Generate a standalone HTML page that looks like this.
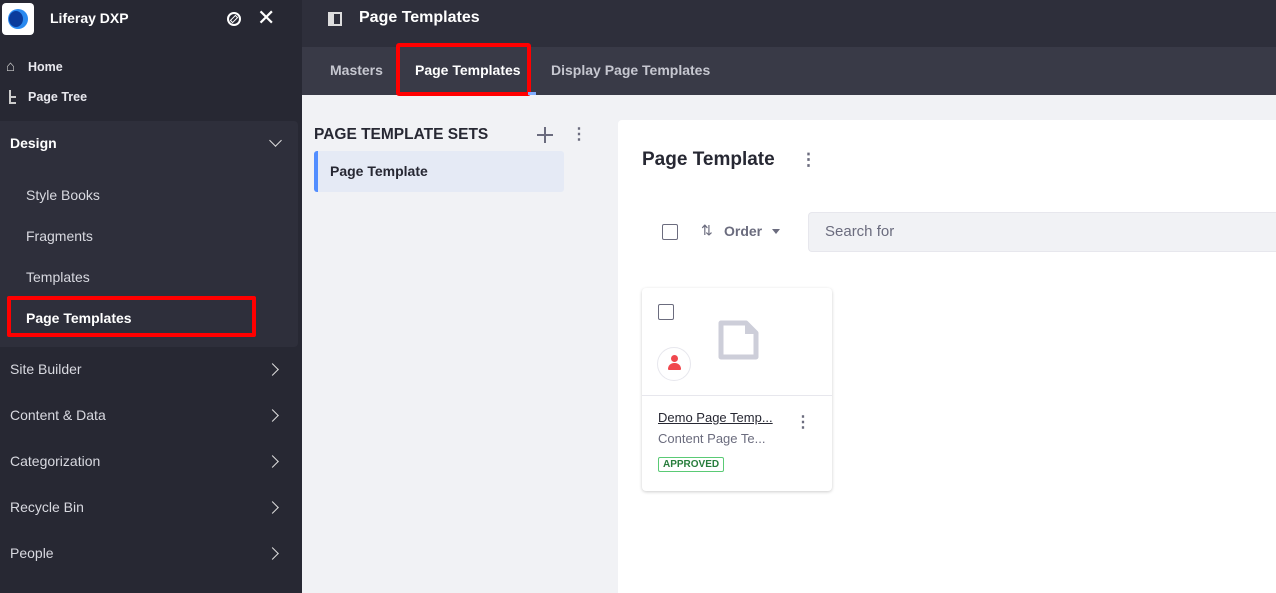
<!DOCTYPE html>
<html><head><style>
*{box-sizing:border-box;margin:0;padding:0}
body{width:1276px;height:593px;overflow:hidden;font-family:"Liberation Sans",sans-serif;background:#f1f2f5;position:relative}
.sb{position:absolute;left:0;top:0;width:302px;height:593px;background:#272833;color:#fff}
.t{position:absolute;white-space:nowrap}
.top{position:absolute;left:302px;top:0;width:974px;height:47px;background:#2e2f3b}
.tabs{position:absolute;left:302px;top:47px;width:974px;height:48px;background:#393a47}
.chev{position:absolute;width:9px;height:9px;border-right:1.5px solid #ddd;border-top:1.5px solid #ddd;transform:rotate(45deg)}
</style></head><body>
<div class="sb">
 <div style="position:absolute;left:2px;top:3px;width:32px;height:32px;background:#fff;border-radius:4px"></div>
 <div style="position:absolute;left:8px;top:9px;width:20px;height:20px;border-radius:50%;background:#2a8af0"></div>
 <div style="position:absolute;left:9px;top:11px;width:14px;height:16px;border-radius:50%;background:#0b3c9c"></div>
 <div class="t" style="left:50px;top:10px;font-size:14px;font-weight:bold">Liferay DXP</div>
 <div style="position:absolute;left:227px;top:12px;width:14px;height:14px;border:2px solid #fff;border-radius:50%"></div>
 <div style="position:absolute;left:232px;top:15px;width:4px;height:8px;border:1.5px solid #fff;transform:rotate(45deg)"></div>
 <div class="t" style="left:257px;top:5px;font-size:22px;color:#fff">✕</div>
 <div class="t" style="left:6px;top:58px;font-size:15px;color:#ccc">⌂</div>
 <div class="t" style="left:28px;top:60px;font-size:12.5px;font-weight:bold;color:#e8e8ee">Home</div>
 <div style="position:absolute;left:9px;top:90px;width:2px;height:14px;background:#ccc"></div>
 <div style="position:absolute;left:10px;top:96px;width:6px;height:2px;background:#ccc"></div>
 <div style="position:absolute;left:10px;top:102px;width:6px;height:2px;background:#ccc"></div>
 <div class="t" style="left:28px;top:90px;font-size:12.5px;font-weight:bold;color:#e8e8ee">Page Tree</div>
 <div style="position:absolute;left:0;top:121px;width:298px;height:226px;background:#2e2f3b;border-radius:0 4px 4px 0"></div>
 <div class="t" style="left:10px;top:135px;font-size:14px;font-weight:bold">Design</div>
 <div class="chev" style="left:271px;top:136px;transform:rotate(135deg)"></div>
 <div class="t" style="left:26px;top:187px;font-size:14px;color:#d8d9e0">Style Books</div>
 <div class="t" style="left:26px;top:228px;font-size:14px;color:#d8d9e0">Fragments</div>
 <div class="t" style="left:26px;top:269px;font-size:14px;color:#d8d9e0">Templates</div>
 <div style="position:absolute;left:7px;top:296px;width:249px;height:41px;border:4px solid #f00;border-radius:2px"></div>
 <div class="t" style="left:26px;top:310px;font-size:14px;font-weight:bold">Page Templates</div>
 <div class="t" style="left:10px;top:361px;font-size:14px;color:#d8d9e0">Site Builder</div><div class="chev" style="left:268px;top:365px"></div>
 <div class="t" style="left:10px;top:407px;font-size:14px;color:#d8d9e0">Content &amp; Data</div><div class="chev" style="left:268px;top:411px"></div>
 <div class="t" style="left:10px;top:453px;font-size:14px;color:#d8d9e0">Categorization</div><div class="chev" style="left:268px;top:457px"></div>
 <div class="t" style="left:10px;top:499px;font-size:14px;color:#d8d9e0">Recycle Bin</div><div class="chev" style="left:268px;top:503px"></div>
 <div class="t" style="left:10px;top:545px;font-size:14px;color:#d8d9e0">People</div><div class="chev" style="left:268px;top:549px"></div>
</div>
<div class="top">
 <div style="position:absolute;left:26px;top:12px;width:14px;height:14px;border:2px solid #ddd;border-left-width:6px"></div>
 <div class="t" style="left:57px;top:9px;font-size:16px;font-weight:bold;color:#fff">Page Templates</div>
</div>
<div class="tabs">
 <div class="t" style="left:28px;top:15px;font-size:14px;font-weight:bold;color:#c6c7d0">Masters</div>
 <div style="position:absolute;left:94px;top:-4px;width:135px;height:53px;border:4px solid #f00;border-radius:3px"></div>
 <div style="position:absolute;left:226px;top:45px;width:8px;height:3px;background:#80acff"></div>
 <div class="t" style="left:113px;top:15px;font-size:14px;font-weight:bold;color:#fff">Page Templates</div>
 <div class="t" style="left:249px;top:15px;font-size:14px;font-weight:bold;color:#c6c7d0">Display Page Templates</div>
</div>
<div class="t" style="left:314px;top:126px;font-size:15.5px;font-weight:bold;color:#272833">PAGE TEMPLATE SETS</div>
<div style="position:absolute;left:537px;top:134px;width:16px;height:2px;background:#6b6c7e"></div>
<div style="position:absolute;left:544px;top:127px;width:2px;height:16px;background:#6b6c7e"></div>
<div class="t" style="left:571px;top:124px;font-size:16px;font-weight:bold;color:#6b6c7e">⋮</div>
<div style="position:absolute;left:314px;top:151px;width:250px;height:41px;background:#e5eaf5;border-left:4px solid #528eff;border-radius:3px"></div>
<div class="t" style="left:330px;top:163px;font-size:14px;font-weight:bold;color:#272833">Page Template</div>
<div style="position:absolute;left:618px;top:120px;width:658px;height:473px;background:#fff;border-radius:4px 0 0 0"></div>
<div class="t" style="left:642px;top:149px;font-size:19px;font-weight:bold;color:#272833">Page Template</div>
<div class="t" style="left:800px;top:150px;font-size:17px;font-weight:bold;color:#6b6c7e">⋮</div>
<div style="position:absolute;left:662px;top:224px;width:16px;height:16px;border:1.5px solid #6b6c7e;border-radius:2px"></div>
<div class="t" style="left:701px;top:222px;font-size:14px;color:#6b6c7e">⇅</div>
<div class="t" style="left:724px;top:223px;font-size:14px;font-weight:bold;color:#6b6c7e">Order</div>
<div style="position:absolute;left:772px;top:229px;border:4px solid transparent;border-top:5px solid #6b6c7e"></div>
<div style="position:absolute;left:808px;top:212px;width:468px;height:40px;background:#f1f2f5;border:1px solid #e7e7ed;border-right:none;border-radius:4px 0 0 4px"></div>
<div class="t" style="left:825px;top:223px;font-size:15px;color:#6b6c7e">Search for</div>
<div style="position:absolute;left:642px;top:288px;width:190px;height:203px;background:#fff;border-radius:4px;box-shadow:0 1px 3px rgba(0,0,0,.2)">
 <svg style="position:absolute;left:74px;top:31px" width="44" height="44" viewBox="0 0 44 44"><path d="M5 4 H30 L40 14 V38 H5 Z" fill="none" stroke="#cdced9" stroke-width="5" stroke-linejoin="round"/><path d="M29 4 L40 15 H29 Z" fill="#cdced9"/></svg>
 <div style="position:absolute;left:16px;top:16px;width:16px;height:16px;border:1.5px solid #6b6c7e;border-radius:2px"></div>
 <div style="position:absolute;left:15px;top:59px;width:34px;height:34px;border:1px solid #e7e7ed;border-radius:50%"></div>
 <div style="position:absolute;left:29px;top:67px;width:7px;height:7px;background:#f0484e;border-radius:50%"></div>
 <div style="position:absolute;left:26px;top:75px;width:13px;height:7px;background:#f0484e;border-radius:6px 6px 1px 1px"></div>
 <div style="position:absolute;left:0;top:107px;width:190px;height:1px;background:#e7e7ed"></div>
 <div class="t" style="left:16px;top:122px;font-size:13px;color:#272833;text-decoration:underline">Demo Page Temp...</div>
 <div class="t" style="left:153px;top:124px;font-size:16px;font-weight:bold;color:#6b6c7e">⋮</div>
 <div class="t" style="left:16px;top:143px;font-size:13px;color:#6b6c7e">Content Page Te...</div>
 <div class="t" style="left:16px;top:169px;font-size:10px;font-weight:bold;color:#287d3c;border:1px solid #5aca75;padding:1px 4px;border-radius:2px">APPROVED</div>
</div>
</body></html>
